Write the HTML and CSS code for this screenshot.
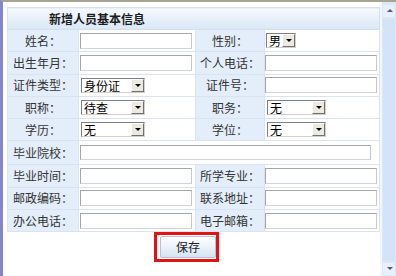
FILE: index.html
```html
<!DOCTYPE html>
<html>
<head>
<meta charset="utf-8">
<link rel="stylesheet" href="styles.css">
</head>
<body>
<div class="frame">
  <div class="content">
    <table class="form">
      <colgroup>
        <col class="c1"><col class="c2"><col class="c3"><col class="c4">
      </colgroup>
      <tr class="head"><th colspan="4">新增人员基本信息</th></tr>
      <tr>
        <td class="lbl">姓名：</td><td class="val"><span class="inp"></span></td>
        <td class="lbl">性别：</td><td class="val v2"><span class="sel w30"><span class="t">男</span><span class="arr"></span></span></td>
      </tr>
      <tr>
        <td class="lbl">出生年月：</td><td class="val"><span class="inp"></span></td>
        <td class="lbl">个人电话：</td><td class="val v2"><span class="inp"></span></td>
      </tr>
      <tr>
        <td class="lbl">证件类型：</td><td class="val"><span class="sel w64"><span class="t">身份证</span><span class="arr"></span></span></td>
        <td class="lbl">证件号：</td><td class="val v2"><span class="inp"></span></td>
      </tr>
      <tr>
        <td class="lbl">职称：</td><td class="val"><span class="sel w64"><span class="t">待查</span><span class="arr"></span></span></td>
        <td class="lbl">职务：</td><td class="val v2"><span class="sel w59"><span class="t">无</span><span class="arr"></span></span></td>
      </tr>
      <tr>
        <td class="lbl">学历：</td><td class="val"><span class="sel w64"><span class="t">无</span><span class="arr"></span></span></td>
        <td class="lbl">学位：</td><td class="val v2"><span class="sel w59"><span class="t">无</span><span class="arr"></span></span></td>
      </tr>
      <tr class="tall">
        <td class="lbl">毕业院校：</td><td class="val" colspan="3"><span class="inp wide"></span></td>
      </tr>
      <tr>
        <td class="lbl">毕业时间：</td><td class="val"><span class="inp"></span></td>
        <td class="lbl">所学专业：</td><td class="val v2"><span class="inp"></span></td>
      </tr>
      <tr>
        <td class="lbl">邮政编码：</td><td class="val"><span class="inp"></span></td>
        <td class="lbl">联系地址：</td><td class="val v2"><span class="inp"></span></td>
      </tr>
      <tr>
        <td class="lbl">办公电话：</td><td class="val"><span class="inp"></span></td>
        <td class="lbl">电子邮箱：</td><td class="val v2"><span class="inp"></span></td>
      </tr>
    </table>
    <div class="actions">
      <span class="mark"><button class="btn">保存</button></span>
    </div>
  </div>
  <div class="scroll">
    <span class="sb up"></span>
    <span class="track"></span>
    <span class="sb down"></span>
  </div>
</div>
</body>
</html>
```
FILE: styles.css
```css
* { box-sizing: border-box; }
html, body { margin: 0; padding: 0; background: #fff; }
body {
  font-family: "Noto Sans CJK SC", "Noto Sans", sans-serif;
  font-size: 12px;
  color: #222;
}
.frame {
  width: 396px;
  height: 276px;
  border-top: 2px solid #a8a594;
  border-left: 3px solid #8486c8;
  display: flex;
  overflow: hidden;
}
.content {
  width: 377px;
  padding: 5px 0 0 4px;
  background: #fff;
}
.form {
  border-collapse: collapse;
  table-layout: fixed;
  width: 372px;
}
.c1 { width: 71px; }
.c2 { width: 117px; }
.c3 { width: 69px; }
.c4 { width: 115px; }
.form td, .form th {
  padding: 0;
  border: 1px solid #d9e4f0;
  height: 22.3px;
  line-height: 14px;
}
.head th {
  height: 22px;
  background: linear-gradient(#f6f9fd, #d9e7f6);
  font-weight: bold;
  font-size: 12px;
  color: #1c1c1c;
  text-align: left;
  padding-left: 41px;
  border-color: #d4e0ee;
}
.tall td { height: 24px; }
.lbl {
  background: #e4eefa;
  text-align: center;
  color: #333;
  border-color: #f2f6fb;
}
.val {
  background: #fff;
  padding-left: 1px !important;
  vertical-align: middle;
}
.v2 { padding-left: 0 !important; }
.inp {
  display: block;
  width: 112px;
  height: 16px;
  border: 1px solid #a6a6a6;
  border-right-color: #c8c8c8;
  border-bottom-color: #d4d4d4;
  background: #fff;
}
.inp.wide { width: 291px; height: 15px; }
.sel {
  display: flex;
  height: 15px;
  border: 1px solid #7f7f7f;
  border-right-color: #d4d0c8;
  border-bottom-color: #d4d0c8;
  background: #fff;
  margin-left: 1px;
}
.sel .t {
  flex: 1;
  font-size: 12px;
  line-height: 13px;
  padding-left: 2px;
  color: #000;
}
.sel .arr {
  width: 13px;
  height: 13px;
  background: #ece9e0;
  border: 1px solid #fff;
  border-right-color: #707070;
  border-bottom-color: #707070;
  position: relative;
}
.sel .arr::after {
  content: "";
  position: absolute;
  left: 3px;
  top: 4px;
  border-left: 3px solid transparent;
  border-right: 3px solid transparent;
  border-top: 3px solid #000;
}
.w30 { width: 30px; }
.w64 { width: 64px; }
.w59 { width: 59px; margin-left: 2px; }
.actions {
  padding: 0 0 0 147px;
}
.mark {
  display: inline-block;
  border: 3px solid #e01414;
  padding: 1px 0 1px 3px;
  width: 65px;
  height: 30px;
}
.btn {
  display: block;
  width: 56px;
  height: 22px;
  border: 1px solid #b4c4d6;
  border-radius: 2px;
  background: linear-gradient(#ffffff, #d6e4f3);
  font-family: "Noto Sans CJK SC", sans-serif;
  font-size: 12px;
  color: #222;
  padding: 0;
  line-height: 18px;
}
.scroll {
  width: 16px;
  display: flex;
  flex-direction: column;
  background: #dce8f8;
  border-left: 2px solid #f3f7fc;
}
.sb {
  height: 12px;
  position: relative;
  background: #e8f0fa;
  margin: 3px 1px 0 1px;
}
.sb::after {
  content: "";
  position: absolute;
  left: 4px;
  top: 4px;
  border-left: 3px solid transparent;
  border-right: 3px solid transparent;
}
.up::after { border-bottom: 3px solid #4a5a78; }
.down::after { border-top: 3px solid #4a5a78; }
.track { flex: 1; background: #d4e4f8; margin: 2px 1px; }
.down { margin: 0 1px 1px 1px; }
```
